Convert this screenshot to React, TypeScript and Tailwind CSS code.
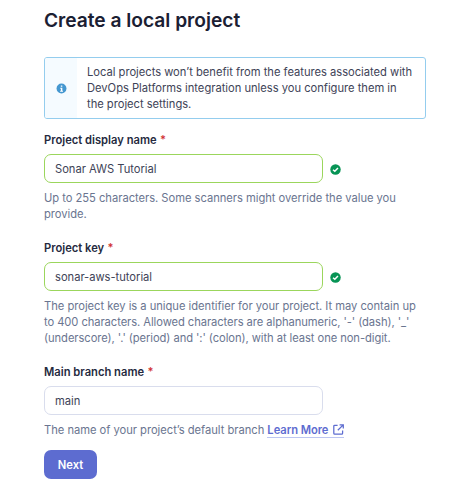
import type { ReactNode } from "react";

function CheckIcon() {
  return (
    <svg className="ml-[7px] mt-px h-[11px] w-[11px] shrink-0" viewBox="0 0 16 16" fill="none">
      <circle cx="8" cy="8" r="7.6" fill="#079455" />
      <path d="M4.4 8.3 7 10.7 11.6 5.8" stroke="#fff" strokeWidth="2.1" />
    </svg>
  );
}

function InfoIcon() {
  return (
    <svg className="h-[11px] w-[11px]" viewBox="0 0 16 16">
      <circle cx="8" cy="8" r="7.2" fill="#4497d0" />
      <path d="M7 3.5h2.2v2H7zM6.2 6.8h3v4.4h1v1.4H6v-1.4h1.1V8.2h-.9z" fill="#fff" />
    </svg>
  );
}

function ExternalIcon() {
  return (
    <svg className="ml-[5px] h-[11px] w-[11px]" viewBox="0 0 11 11" fill="none" stroke="#5d6cd0" strokeWidth="1.25">
      <path d="M4.6 1.3H1.7Q.8 1.3.8 2.2v7.1q0 .9.9.9h7q.9 0 .9-.9V6.6M6.6.8h3.7v3.7M10 1.1 4.8 6.3" />
    </svg>
  );
}

type FieldProps = { id: string; label: string; value: string; valid?: boolean; children: ReactNode };

function Field({ id, label, value, valid, children }: FieldProps) {
  return (
    <div className="flex flex-col">
      <label htmlFor={id} className="font-semibold text-[#252a3e]">
        {label} <span className="ml-[0.5px] text-[#d02f2f]">*</span>
      </label>
      <div className="mt-1.5 flex items-center">
        <input
          id={id}
          defaultValue={value}
          className={`h-[29px] w-[279px] rounded-[7px] border bg-white px-2.5 tracking-[-0.03px] text-[#3e4357] outline-none ${
            valid ? "border-[#9bd65c]" : "border-[#d9dded]"
          }`}
        />
        {valid && <CheckIcon />}
      </div>
      <div className="mt-[7px] whitespace-nowrap tracking-[-0.03px] text-[#6a7590]">{children}</div>
    </div>
  );
}

export default function App() {
  return (
    <main className="h-[500px] w-[455px] overflow-hidden bg-white pl-11 pt-2 font-['Inter',sans-serif] text-[11.2px] leading-4">
      <h1 className="text-[19.2px] font-semibold leading-[25px] tracking-[-0.02px] text-[#1b2033]">Create a local project</h1>
      <div className="mt-6 flex h-[62px] w-[382px] overflow-hidden rounded-[3px] border border-[#94cdee]">
        <div className="flex w-8 items-center justify-center bg-[#f5fbff]">
          <InfoIcon />
        </div>
        <p className="whitespace-nowrap py-[6px] pl-[10px] tracking-[-0.02px] text-[#3e4357]">
          Local projects won’t benefit from the features associated with
          <br />
          DevOps Platforms integration unless you configure them in
          <br />
          the project settings.
        </p>
      </div>
      <form className="mt-[13px] flex flex-col gap-[18px]">
        <Field id="name" label="Project display name" value="Sonar AWS Tutorial" valid>
          Up to 255 characters. Some scanners might override the value you
          <br />
          provide.
        </Field>
        <Field id="key" label="Project key" value="sonar-aws-tutorial" valid>
          The project key is a unique identifier for your project. It may contain up
          <br />
          <span className="tracking-[-0.07px]">
            to 400 characters. Allowed characters are alphanumeric, '-' (dash), '_'
            <br />
            (underscore), '.' (period) and ':' (colon), with at least one non-digit.
          </span>
        </Field>
        <Field id="branch" label="Main branch name" value="main">
          <div className="flex">
            <span>The name of your project’s default branch&nbsp;</span>
            <a className="flex h-[16px] items-center border-b border-[#bdc6f2] font-semibold tracking-[-0.06px] text-[#5d6cd0]">
              Learn More
              <ExternalIcon />
            </a>
          </div>
        </Field>
        <button type="button" className="-mt-1.5 h-[29px] w-[53px] rounded-[7px] bg-[#5d6cd0] font-semibold text-white">
          Next
        </button>
      </form>
    </main>
  );
}
